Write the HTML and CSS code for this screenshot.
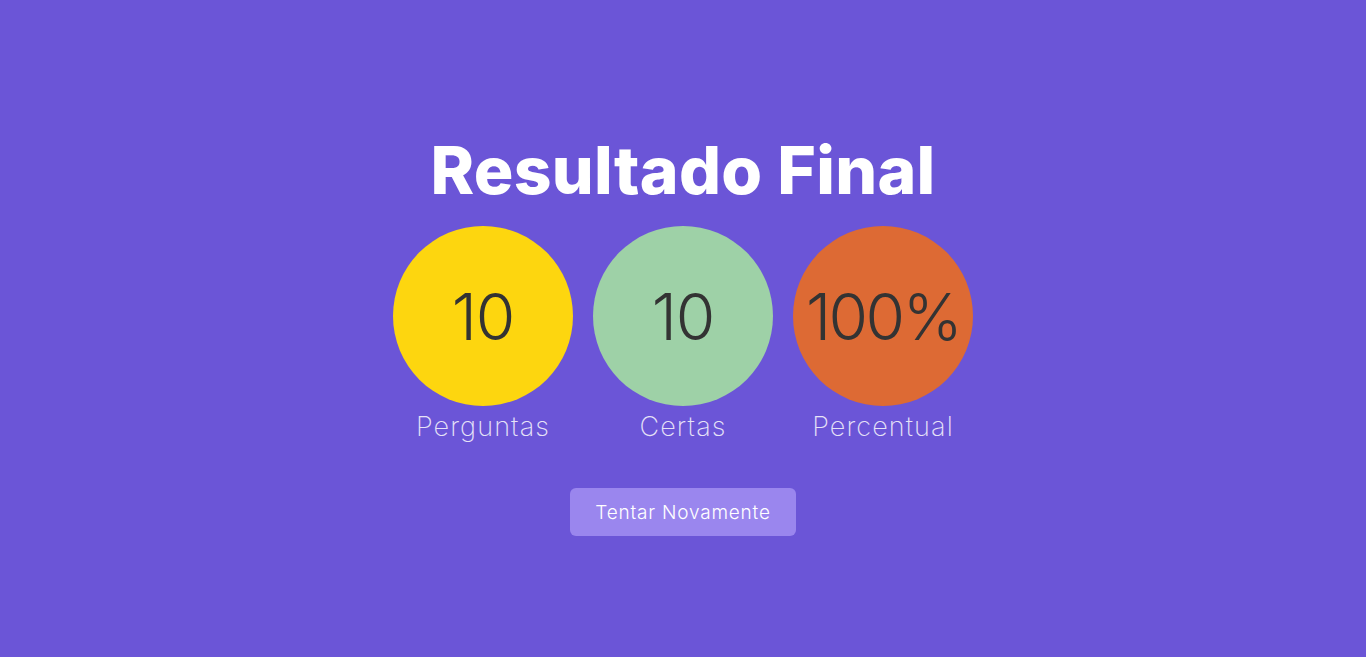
FILE: index.html
```html
<!DOCTYPE html>
<html lang="pt-BR">
<head>
<meta charset="utf-8">
<title>Resultado Final</title>
<link rel="stylesheet" href="styles.css">
</head>
<body>
<main class="screen">
  <h1 class="title">Resultado Final</h1>
  <div class="stats">
    <div class="stat">
      <div class="circle yellow">10</div>
      <div class="label">Perguntas</div>
    </div>
    <div class="stat">
      <div class="circle green">10</div>
      <div class="label">Certas</div>
    </div>
    <div class="stat">
      <div class="circle orange">100%</div>
      <div class="label">Percentual</div>
    </div>
  </div>
  <button class="retry">Tentar Novamente</button>
</main>
</body>
</html>
```
FILE: styles.css
```css
html, body {
  margin: 0;
  padding: 0;
}
body {
  background: #6b55d7;
  font-family: "Inter", "Lato", "Noto Sans", sans-serif;
  height: 657px;
  overflow: hidden;
}
.screen {
  display: flex;
  flex-direction: column;
  align-items: center;
  padding-top: 126px;
}
.title {
  margin: 0;
  font-size: 66px;
  line-height: 88px;
  font-weight: 800;
  color: #ffffff;
  letter-spacing: 0.3px;
}
.stats {
  display: flex;
  gap: 20px;
  margin-top: 12px;
}
.stat {
  display: flex;
  flex-direction: column;
  align-items: center;
  width: 180px;
}
.circle {
  width: 180px;
  height: 180px;
  border-radius: 50%;
  display: flex;
  align-items: center;
  justify-content: center;
  color: #333333;
  font-size: 64px;
  font-weight: 300;
  letter-spacing: -1px;
}
.orange { letter-spacing: -2.5px; }
.yellow { background: #fdd60f; }
.green { background: #9ed1a7; }
.orange { background: #dd6a34; }
.label {
  margin-top: 5px;
  font-size: 27px;
  line-height: 32px;
  font-weight: 200;
  letter-spacing: 1.1px;
  color: #e6e2f7;
}
.retry {
  margin-top: 45px;
  width: 226px;
  height: 48px;
  border: none;
  border-radius: 6px;
  background: #9a86ee;
  color: #ffffff;
  font-family: "Inter", "Lato", "Noto Sans", sans-serif;
  font-size: 19px;
  font-weight: 300;
  letter-spacing: 0.8px;
  padding: 0;
}
```
